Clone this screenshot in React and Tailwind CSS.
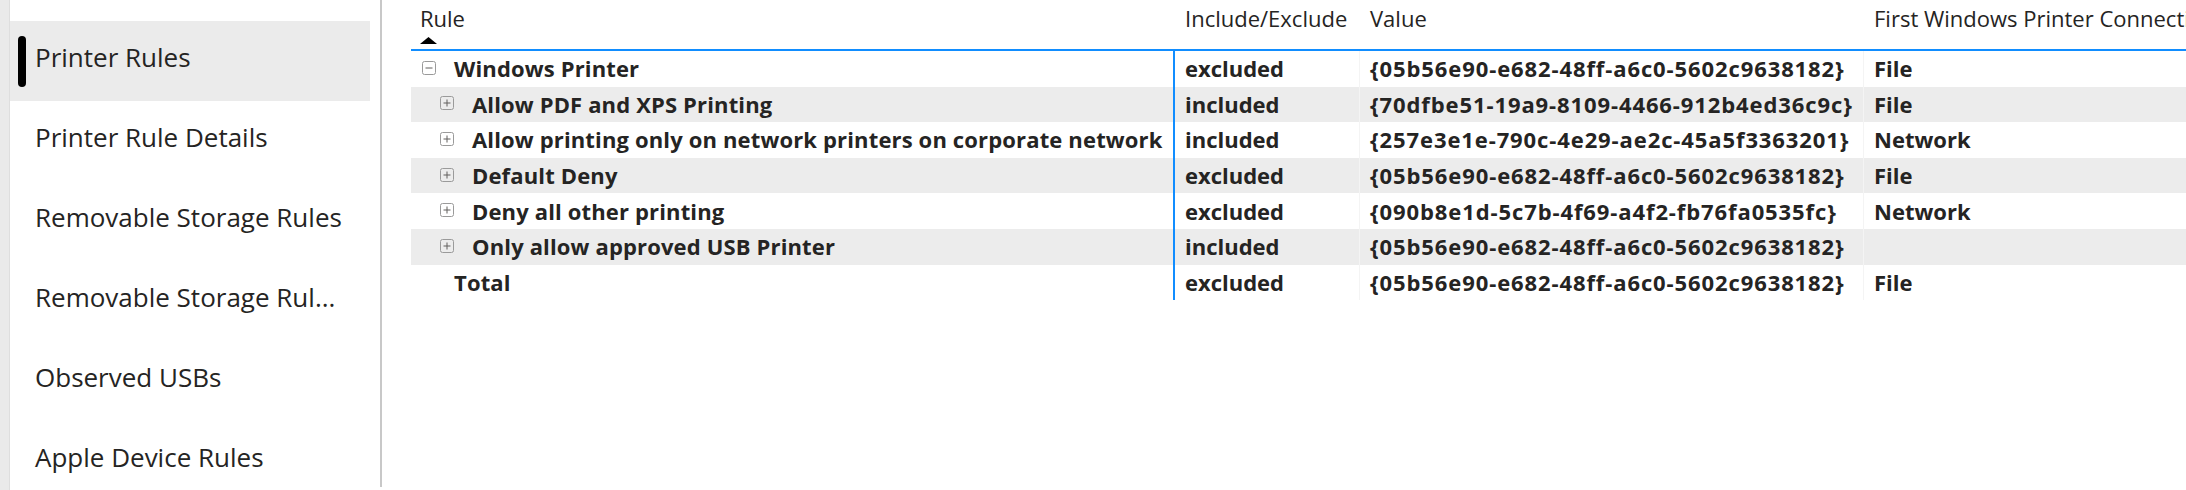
import React from "react";

const navItems = [
  "Printer Rules",
  "Printer Rule Details",
  "Removable Storage Rules",
  "Removable Storage Rul...",
  "Observed USBs",
  "Apple Device Rules",
];

const rows = [
  {
    level: 0,
    icon: "minus",
    rule: "Windows Printer",
    inc: "excluded",
    value: "{05b56e90-e682-48ff-a6c0-5602c9638182}",
    conn: "File",
  },
  {
    level: 1,
    icon: "plus",
    rule: "Allow PDF and XPS Printing",
    inc: "included",
    value: "{70dfbe51-19a9-8109-4466-912b4ed36c9c}",
    conn: "File",
  },
  {
    level: 1,
    icon: "plus",
    rule: "Allow printing only on network printers on corporate network",
    inc: "included",
    value: "{257e3e1e-790c-4e29-ae2c-45a5f3363201}",
    conn: "Network",
  },
  {
    level: 1,
    icon: "plus",
    rule: "Default Deny",
    inc: "excluded",
    value: "{05b56e90-e682-48ff-a6c0-5602c9638182}",
    conn: "File",
  },
  {
    level: 1,
    icon: "plus",
    rule: "Deny all other printing",
    inc: "excluded",
    value: "{090b8e1d-5c7b-4f69-a4f2-fb76fa0535fc}",
    conn: "Network",
  },
  {
    level: 1,
    icon: "plus",
    rule: "Only allow approved USB Printer",
    inc: "included",
    value: "{05b56e90-e682-48ff-a6c0-5602c9638182}",
    conn: "",
  },
  {
    level: 0,
    icon: null,
    rule: "Total",
    inc: "excluded",
    value: "{05b56e90-e682-48ff-a6c0-5602c9638182}",
    conn: "File",
  },
];

const ExpandIcon = ({ type }) => (
  <svg width="14" height="14" viewBox="0 0 14 14" className="shrink-0 mb-[2px]">
    <rect x="0.5" y="0.5" width="13" height="13" rx="2" fill="none" stroke="#9a9a9a" />
    <line x1="3.5" y1="7" x2="10.5" y2="7" stroke="#605e5c" strokeWidth="1" />
    {type === "plus" && (
      <line x1="7" y1="3.5" x2="7" y2="10.5" stroke="#605e5c" strokeWidth="1" />
    )}
  </svg>
);

const NavItem = ({ label, active }) => (
  <div className={`flex items-center h-[80px] ${active ? "bg-[#ebebeb]" : ""}`}>
    <div
      className={`ml-[8px] w-[8px] h-[51px] rounded-full ${active ? "bg-black" : ""}`}
    ></div>
    <span className="ml-[9px] mb-[7px] text-[26px] text-[#252423] whitespace-nowrap">
      {label}
    </span>
  </div>
);

const TableRow = ({ row, shaded }) => (
  <div
    className={`flex h-[35.6px] items-center font-bold text-[22px] text-[#252423] whitespace-nowrap ${shaded ? "bg-[#ececec]" : ""}`}
  >
    <div className="w-[764px] h-full shrink-0 flex items-center pl-[11px] border-r-2 border-[#118dff]">
      {row.level === 1 && <div className="w-[18px] shrink-0"></div>}
      {row.icon ? <ExpandIcon type={row.icon} /> : <div className="w-[14px] shrink-0"></div>}
      <span className="ml-[18px] tracking-[0.15px]">{row.rule}</span>
    </div>
    <div className="w-[184px] h-full shrink-0 flex items-center pl-[10px]">{row.inc}</div>
    <div className="w-[504px] h-full shrink-0 flex items-center pl-[10px] border-l border-[#f4f4f4] tracking-[0.9px]">
      {row.value}
    </div>
    <div className="flex-1 h-full flex items-center pl-[10px] border-l border-[#f4f4f4]">
      {row.conn}
    </div>
  </div>
);

export default function App() {
  return (
    <div className="w-[2186px] h-[490px] flex bg-white overflow-hidden font-['Open_Sans',sans-serif]">
      <div className="w-[10px] h-full shrink-0 bg-[#eaeaea] border-r border-[#dedede]"></div>
      <div className="w-[372px] h-[487px] shrink-0 pr-[10px] pt-[21px] border-r-2 border-[#c8c8c8] overflow-hidden">
        {navItems.map((item, i) => (
          <NavItem key={item} label={item} active={i === 0} />
        ))}
      </div>
      <div className="flex-1 pl-[29px] overflow-hidden">
        <div className="flex h-[51px] border-b-2 border-[#118dff] text-[22px] text-[#252423] whitespace-nowrap">
          <div className="w-[764px] shrink-0 pl-[9px] pt-[4px] border-r-2 border-transparent">
            <div className="leading-[28px]">Rule</div>
            <svg width="17" height="7" viewBox="0 0 17 7" className="mt-[5px]">
              <polygon points="0,7 8.5,0 17,7" fill="#000" />
            </svg>
          </div>
          <div className="w-[184px] shrink-0 pl-[10px] pt-[4px] leading-[28px]">
            Include/Exclude
          </div>
          <div className="w-[504px] shrink-0 pl-[10px] pt-[4px] leading-[28px] border-l border-transparent">
            Value
          </div>
          <div className="flex-1 pl-[10px] pt-[4px] leading-[28px] border-l border-transparent overflow-hidden">
            First Windows Printer Connection Type
          </div>
        </div>
        {rows.map((row, i) => (
          <TableRow key={i} row={row} shaded={i % 2 === 1} />
        ))}
      </div>
    </div>
  );
}
